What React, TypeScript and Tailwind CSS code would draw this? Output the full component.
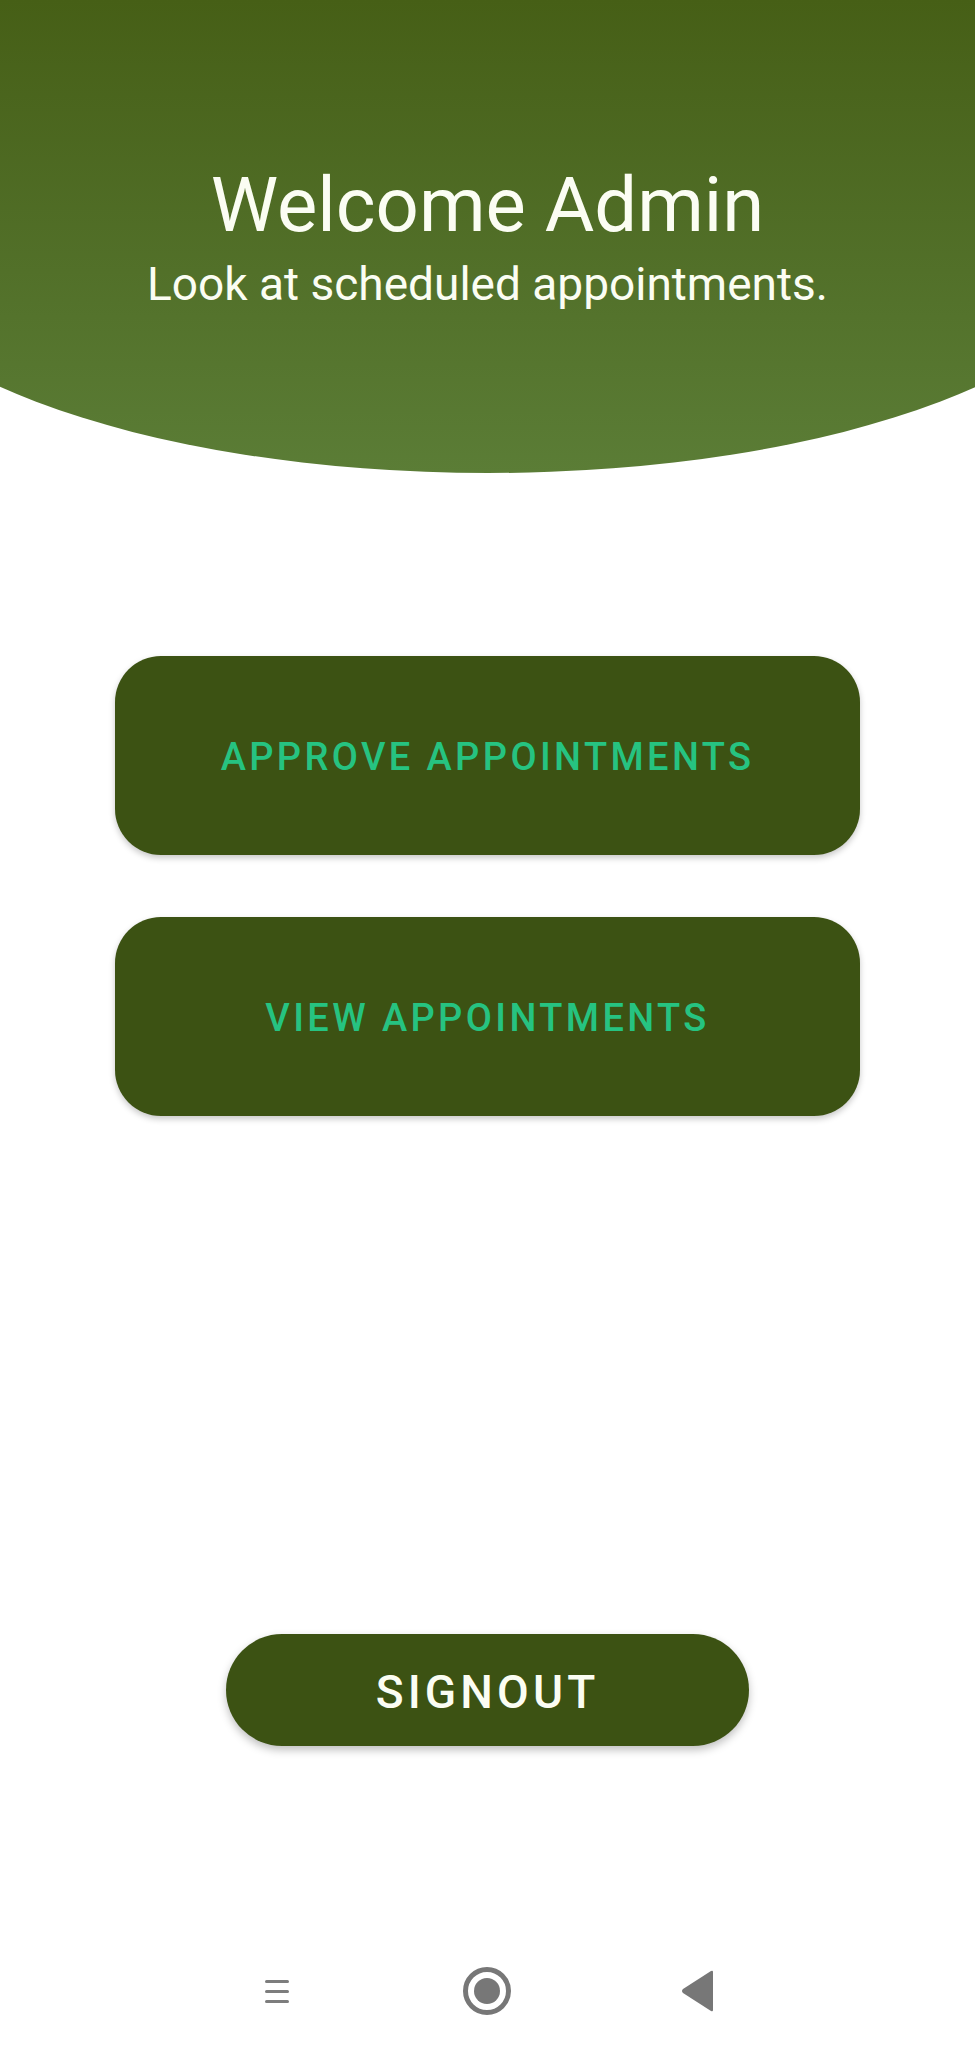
import React from "react";

const font = { fontFamily: "Roboto, 'Noto Sans', sans-serif" };

function BigButton({ label }: { label: string }) {
  return (
    <button
      className="mx-auto flex h-[199px] w-[745px] items-center justify-center rounded-[46px] bg-[#3c5213] pt-[3px] text-[38px] font-medium tracking-[0.089em] text-[#26c381] shadow-[0_3px_6px_rgba(0,0,0,0.22)]"
    >
      {label}
    </button>
  );
}

export default function App() {
  return (
    <div
      className="relative flex h-[2048px] w-[975px] flex-col overflow-hidden bg-white"
      style={font}
    >
      {/* Header */}
      <div className="h-[473px] w-[975px] shrink-0">
        <div className="ml-[-152.5px] flex h-[473px] w-[1280px] flex-col items-center rounded-b-[640px_244px] bg-gradient-to-b from-[#465f16] to-[#5b7d36] pt-[165px]">
          <div className="text-[76px] leading-[80px] text-[#fbfdf3]">Welcome Admin</div>
          <div className="mt-[11px] text-[46px] leading-[56px] text-[#fbfdf3]">
            Look at scheduled appointments.
          </div>
        </div>
      </div>

      {/* Action buttons */}
      <div className="mt-[183px] flex flex-col gap-[62px]">
        <BigButton label="APPROVE APPOINTMENTS" />
        <BigButton label="VIEW APPOINTMENTS" />
      </div>

      {/* Signout */}
      <button className="mx-auto mt-[518px] flex h-[112px] w-[523px] items-center justify-center rounded-full bg-[#3c5213] pt-[4px] text-[46px] font-medium tracking-[0.09em] text-[#fbfdf3] shadow-[0_4px_8px_rgba(0,0,0,0.25)]">
        SIGNOUT
      </button>

      {/* Nav bar */}
      <div className="mt-auto flex h-[118px] items-start justify-center pt-[37px]">
        <div className="flex w-[975px] items-center">
          <div className="ml-[265px] flex h-[48px] w-[24px] flex-col justify-center gap-[7px]">
            <div className="h-[3px] w-[24px] rounded-full bg-[#7d7d7d]" />
            <div className="h-[3px] w-[24px] rounded-full bg-[#7d7d7d]" />
            <div className="h-[3px] w-[24px] rounded-full bg-[#7d7d7d]" />
          </div>
          <div className="ml-[174px] flex h-[48px] w-[48px] items-center justify-center rounded-full border-[5px] border-[#777777]">
            <div className="h-[26px] w-[26px] rounded-full bg-[#777777]" />
          </div>
          <svg className="ml-[169px]" width="36" height="44" viewBox="0 0 36 44">
            <path
              d="M33 3 L33 41 Q33 43 31 42 L3 24 Q1 22 3 20 L31 2 Q33 1 33 3 Z"
              fill="#777777"
            />
          </svg>
        </div>
      </div>
    </div>
  );
}
